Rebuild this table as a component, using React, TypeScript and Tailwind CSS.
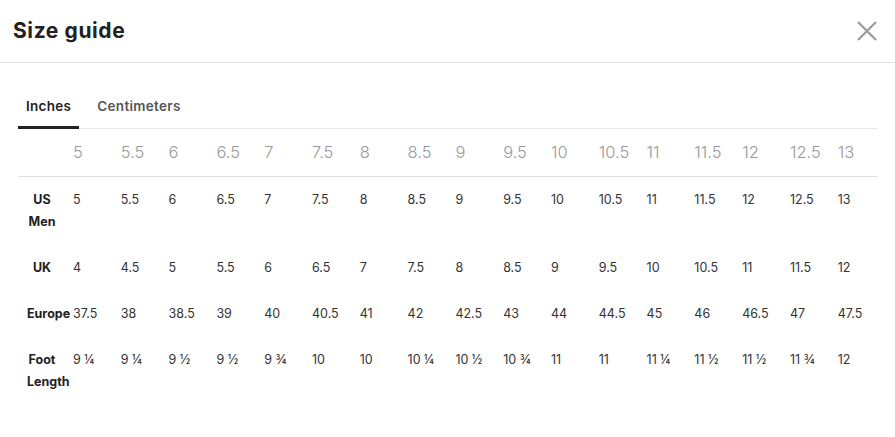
const sizes = ['5', '5.5', '6', '6.5', '7', '7.5', '8', '8.5', '9', '9.5', '10', '10.5', '11', '11.5', '12', '12.5', '13'];

const rows: { label: string[]; values: string[] }[] = [
  { label: ['US', 'Men'], values: sizes },
  { label: ['UK'], values: ['4', '4.5', '5', '5.5', '6', '6.5', '7', '7.5', '8', '8.5', '9', '9.5', '10', '10.5', '11', '11.5', '12'] },
  { label: ['Europe'], values: ['37.5', '38', '38.5', '39', '40', '40.5', '41', '42', '42.5', '43', '44', '44.5', '45', '46', '46.5', '47', '47.5'] },
  {
    label: ['Foot', 'Length'],
    values: ['9 ¼', '9 ¼', '9 ½', '9 ½', '9 ¾', '10', '10', '10 ¼', '10 ½', '10 ¾', '11', '11', '11 ¼', '11 ½', '11 ½', '11 ¾', '12'],
  },
];

export default function App() {
  return (
    <div className="w-[895px] h-[437px] bg-white overflow-hidden font-['Inter',sans-serif] text-[#222]">
      <div className="h-[63px] flex items-center justify-between pl-[13px] pr-[17px] border-b border-[#e5e5e5]">
        <h1 className="text-[21px] font-bold tracking-[0.6px]">Size guide</h1>
        <button className="w-[22px] h-[22px] flex items-center justify-center text-[#9a9a9a]">
          <svg width="22" height="22" viewBox="0 0 22 22" fill="none" stroke="currentColor" strokeWidth="2.2">
            <path d="M2 2 L20 20 M20 2 L2 20" />
          </svg>
        </button>
      </div>

      <div className="px-[18px]">
        <div className="mt-[33px] flex border-b border-[#e5e5e5] text-[13.5px] font-semibold tracking-[0.3px]">
          <div className="px-[8px] pb-[10px] leading-[20px] border-b-[3px] border-[#222] -mb-px">Inches</div>
          <div className="ml-[10px] px-[8px] pb-[10px] leading-[20px] text-[#555]">Centimeters</div>
        </div>

        <table className="table-fixed border-collapse w-[860px]">
          <colgroup>
            <col className="w-[55px]" />
            {sizes.slice(0, 16).map((s) => (
              <col key={s} className="w-[47.8px]" />
            ))}
            <col />
          </colgroup>
          <thead>
            <tr className="border-b border-[#e0e0e0]">
              <th className="h-[47px]" />
              {sizes.map((s) => (
                <th key={s} className="h-[47px] text-left font-light text-[16.5px] text-[#999] whitespace-nowrap">
                  {s}
                </th>
              ))}
            </tr>
          </thead>
          <tbody>
            {rows.map((r) => (
              <tr key={r.label.join(' ')} className="align-top">
                <td className="pl-[9px] pr-[16px] py-3 text-center text-[12.5px] font-bold leading-[22px] text-[#222]">
                  {r.label.map((l) => (
                    <div key={l}>{l}</div>
                  ))}
                </td>
                {r.values.map((v, i) => (
                  <td key={i} className="py-3 text-left text-[12.5px] leading-[22px] text-[#333] whitespace-nowrap">
                    {v}
                  </td>
                ))}
              </tr>
            ))}
          </tbody>
        </table>
      </div>
    </div>
  );
}
